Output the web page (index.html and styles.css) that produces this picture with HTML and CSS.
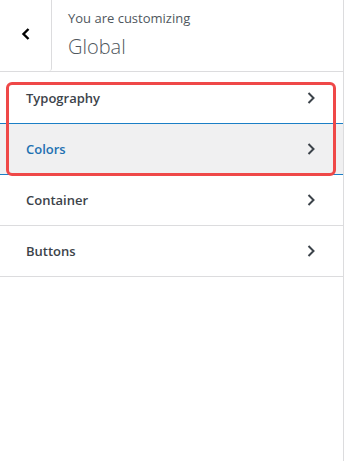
FILE: index.html
```html
<!DOCTYPE html>
<html lang="en">
<head>
    <meta charset="UTF-8">
    <meta name="viewport" content="width=device-width, initial-scale=1.0">
    <title>Customizer - Global</title>
    <link rel="stylesheet" href="styles.css">
</head>
<body>
    <div id="panel">
        <div class="header">
            <button class="back" aria-label="Back">
                <svg width="10" height="14" viewBox="0 0 10 14">
                    <path d="M7.5 2 L2.5 7 L7.5 12" fill="none" stroke="#000" stroke-width="2.4"/>
                </svg>
            </button>
            <div class="title">
                <span class="sub">You are customizing</span>
                <span class="name">Global</span>
            </div>
        </div>

        <ul class="sections">
            <li class="section before-active">
                <span>Typography</span>
                <svg class="chev" width="10" height="14" viewBox="0 0 10 14">
                    <path d="M2.5 2 L7.5 7 L2.5 12" fill="none" stroke="#3c434a" stroke-width="2"/>
                </svg>
            </li>
            <li class="section active">
                <span>Colors</span>
                <svg class="chev" width="10" height="14" viewBox="0 0 10 14">
                    <path d="M2.5 2 L7.5 7 L2.5 12" fill="none" stroke="#3c434a" stroke-width="2"/>
                </svg>
            </li>
            <li class="section">
                <span>Container</span>
                <svg class="chev" width="10" height="14" viewBox="0 0 10 14">
                    <path d="M2.5 2 L7.5 7 L2.5 12" fill="none" stroke="#3c434a" stroke-width="2"/>
                </svg>
            </li>
            <li class="section">
                <span>Buttons</span>
                <svg class="chev" width="10" height="14" viewBox="0 0 10 14">
                    <path d="M2.5 2 L7.5 7 L2.5 12" fill="none" stroke="#3c434a" stroke-width="2"/>
                </svg>
            </li>
        </ul>

        <!-- highlight drawn over the first two sections -->
        <div class="highlight"></div>
    </div>
</body>
</html>
```

FILE: styles.css
```css
body {
    margin: 0;
    font-family: "Open Sans", "Noto Sans", sans-serif;
    background: #fff;
}

#panel {
    position: relative;
    width: 344px;
    height: 461px;
    border-right: 1px solid #dcdcde;
    box-sizing: border-box;
}

.header {
    display: flex;
    height: 72px;
    border-bottom: 1px solid #dcdcde;
    box-sizing: border-box;
}

.back {
    width: 52px;
    height: 71px;
    padding: 0 0 4px 0;
    border: none;
    border-right: 1px solid #dcdcde;
    border-bottom-right-radius: 3px;
    background: #fff;
    display: flex;
    align-items: center;
    justify-content: center;
    box-sizing: border-box;
}

.title {
    display: flex;
    flex-direction: column;
    padding: 8px 0 0 16px;
    color: #50575e;
}

.title .sub {
    font-size: 13px;
    line-height: 20px;
}

.title .name {
    font-size: 20px;
    font-weight: 300;
    line-height: 28px;
    margin-top: 5px;
}

.sections {
    list-style: none;
    margin: 0;
    padding: 0;
}

.section {
    display: flex;
    align-items: center;
    justify-content: space-between;
    height: 51px;
    padding: 0 26px;
    border-bottom: 1px solid #dcdcde;
    box-sizing: border-box;
    font-size: 13px;
    font-weight: 600;
    color: #3c434a;
}

.section.before-active {
    height: 52px;
    border-bottom-color: #1b7fc6;
}

.section.active {
    border-bottom-color: #1b7fc6;
    background: #f0f0f1;
    color: #2271b1;
}

.chev {
    margin-right: 1px;
}

.highlight {
    position: absolute;
    left: 6px;
    top: 82px;
    width: 330px;
    height: 94px;
    border: 3px solid #ef4848;
    border-radius: 6px;
    box-sizing: border-box;
}
```
